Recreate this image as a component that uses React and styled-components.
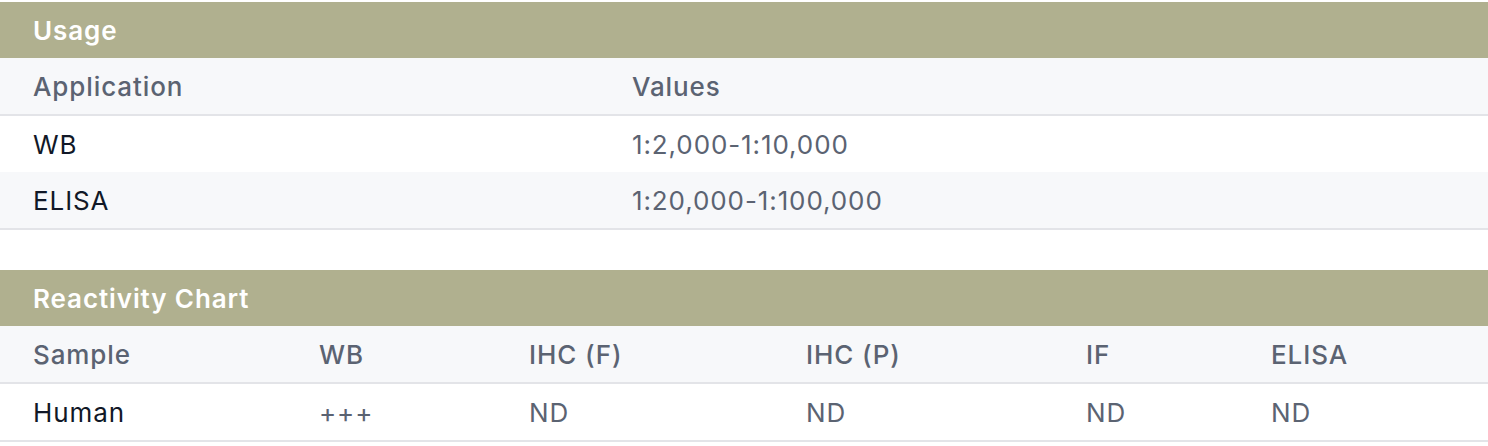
import React from "react";
import styled, { createGlobalStyle } from "styled-components";

const Global = createGlobalStyle`
  html, body { margin: 0; padding: 0; background: #ffffff; }
  body { font-family: Inter, "Noto Sans", "Liberation Sans", sans-serif; -webkit-font-smoothing: antialiased; }
`;

const Page = styled.div`
  display: flex;
  flex-direction: column;
  gap: 40px;
  padding-top: 2px;
`;

const Section = styled.section`
  display: flex;
  flex-direction: column;
`;

const Title = styled.h2`
  margin: 0;
  height: 56px;
  display: flex;
  align-items: center;
  padding: 0 33px;
  background: #b0b08f;
  color: #ffffff;
  font-size: 26px;
  font-weight: 600;
  letter-spacing: 0.9px;
`;

const Row = styled.div`
  display: grid;
  grid-template-columns: ${(p) => p.$cols};
  height: 56px;
  align-items: center;
  padding: 0 33px;
  background: ${(p) => (p.$shade ? "#f7f8fa" : "#ffffff")};
  border-bottom: ${(p) => (p.$border ? "2px solid #e3e4e8" : "none")};
`;

const HeadCell = styled.div`
  color: #5b6372;
  font-size: 26px;
  font-weight: 500;
  letter-spacing: 0.9px;
  white-space: nowrap;
`;

const Cell = styled.div`
  color: ${(p) => (p.$dark ? "#111827" : "#5b6372")};
  font-size: 26px;
  font-weight: 400;
  letter-spacing: 0.9px;
  white-space: nowrap;
`;

const usageCols = "599px 1fr";
const reactCols = "286px 210px 277px 280px 185px 1fr";

export default function App() {
  return (
    <>
      <Global />
      <Page>
        <Section>
          <Title>Usage</Title>
          <Row $cols={usageCols} $shade $border>
            <HeadCell>Application</HeadCell>
            <HeadCell>Values</HeadCell>
          </Row>
          <Row $cols={usageCols}>
            <Cell $dark>WB</Cell>
            <Cell>1:2,000-1:10,000</Cell>
          </Row>
          <Row $cols={usageCols} $shade $border>
            <Cell $dark>ELISA</Cell>
            <Cell>1:20,000-1:100,000</Cell>
          </Row>
        </Section>
        <Section>
          <Title>Reactivity Chart</Title>
          <Row $cols={reactCols} $shade $border>
            <HeadCell>Sample</HeadCell>
            <HeadCell>WB</HeadCell>
            <HeadCell>IHC (F)</HeadCell>
            <HeadCell>IHC (P)</HeadCell>
            <HeadCell>IF</HeadCell>
            <HeadCell>ELISA</HeadCell>
          </Row>
          <Row $cols={reactCols} $border>
            <Cell $dark>Human</Cell>
            <Cell>+++</Cell>
            <Cell>ND</Cell>
            <Cell>ND</Cell>
            <Cell>ND</Cell>
            <Cell>ND</Cell>
          </Row>
        </Section>
      </Page>
    </>
  );
}
